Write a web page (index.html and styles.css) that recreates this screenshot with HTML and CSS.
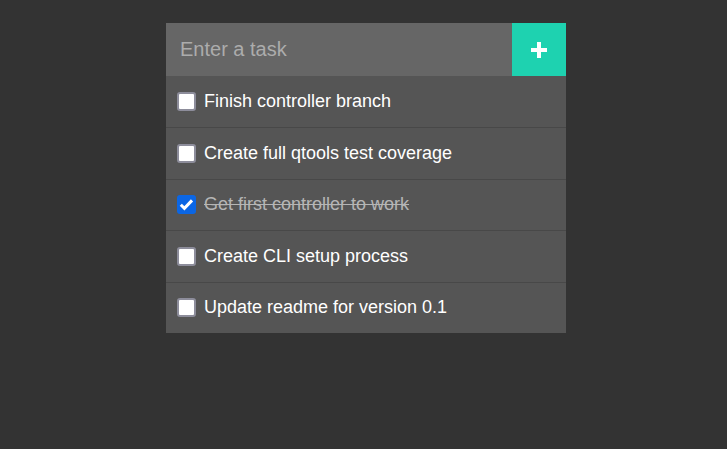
FILE: index.html
```html
<!DOCTYPE html>
<html>
<head>
<meta charset="utf-8">
<link rel="stylesheet" href="styles.css">
</head>
<body>
<div class="app">
  <form class="entry">
    <input class="task-input" type="text" placeholder="Enter a task" autofocus>
    <button class="add-btn" type="button">
      <svg width="18" height="18" viewBox="0 0 18 18"><path d="M9 1v16M1 9h16" stroke="#fff" stroke-width="4" fill="none"/></svg>
    </button>
  </form>
  <ul class="tasks">
    <li class="task"><input type="checkbox" class="check"><span>Finish controller branch</span></li>
    <li class="task"><input type="checkbox" class="check"><span>Create full qtools test coverage</span></li>
    <li class="task done"><input type="checkbox" class="check" checked><span>Get first controller to work</span></li>
    <li class="task"><input type="checkbox" class="check"><span>Create CLI setup process</span></li>
    <li class="task"><input type="checkbox" class="check"><span>Update readme for version 0.1</span></li>
  </ul>
</div>
</body>
</html>
```
FILE: styles.css
```css
html, body {
  margin: 0;
  padding: 0;
  background: #333333;
  font-family: "Liberation Sans", Arial, sans-serif;
}
.app {
  width: 400px;
  margin: 23px 0 0 166px;
}
.entry {
  display: flex;
  height: 53px;
  margin: 0;
}
.task-input {
  flex: 1;
  border: none;
  outline: none;
  background: #666666;
  color: #ffffff;
  font-family: "Liberation Sans", Arial, sans-serif;
  font-size: 20px;
  padding: 0 0 0 14px;
  margin: 0;
  caret-color: #ffffff;
}
.task-input::placeholder {
  color: #acacac;
}
.add-btn {
  width: 54px;
  border: none;
  background: #1ed2b0;
  display: flex;
  align-items: center;
  justify-content: center;
  padding: 0;
  margin: 0;
}
.tasks {
  list-style: none;
  margin: 0;
  padding: 0;
  background: #555555;
}
.task {
  display: flex;
  align-items: center;
  box-sizing: border-box;
  height: 51.4px;
  padding: 0 0 0 11px;
  border-top: 1px solid #484848;
  color: #ffffff;
  font-size: 18px;
}
.task:first-child {
  border-top: none;
}
.check {
  appearance: none;
  -webkit-appearance: none;
  box-sizing: border-box;
  width: 19px;
  height: 19px;
  margin: 0 8px 0 0;
  border: 2px solid #8d8d9b;
  border-radius: 3px;
  background: #ffffff;
  flex: none;
}
.check:checked {
  border: none;
  background: #0b66e4 url("data:image/svg+xml;utf8,<svg xmlns='http://www.w3.org/2000/svg' viewBox='0 0 19 19'><path d='M3.8 9.8l3.6 3.6 7.6-8' stroke='white' stroke-width='3' fill='none'/></svg>") no-repeat center / 19px 19px;
}
.done span {
  color: #b5b5b5;
  text-decoration: line-through;
}
```
